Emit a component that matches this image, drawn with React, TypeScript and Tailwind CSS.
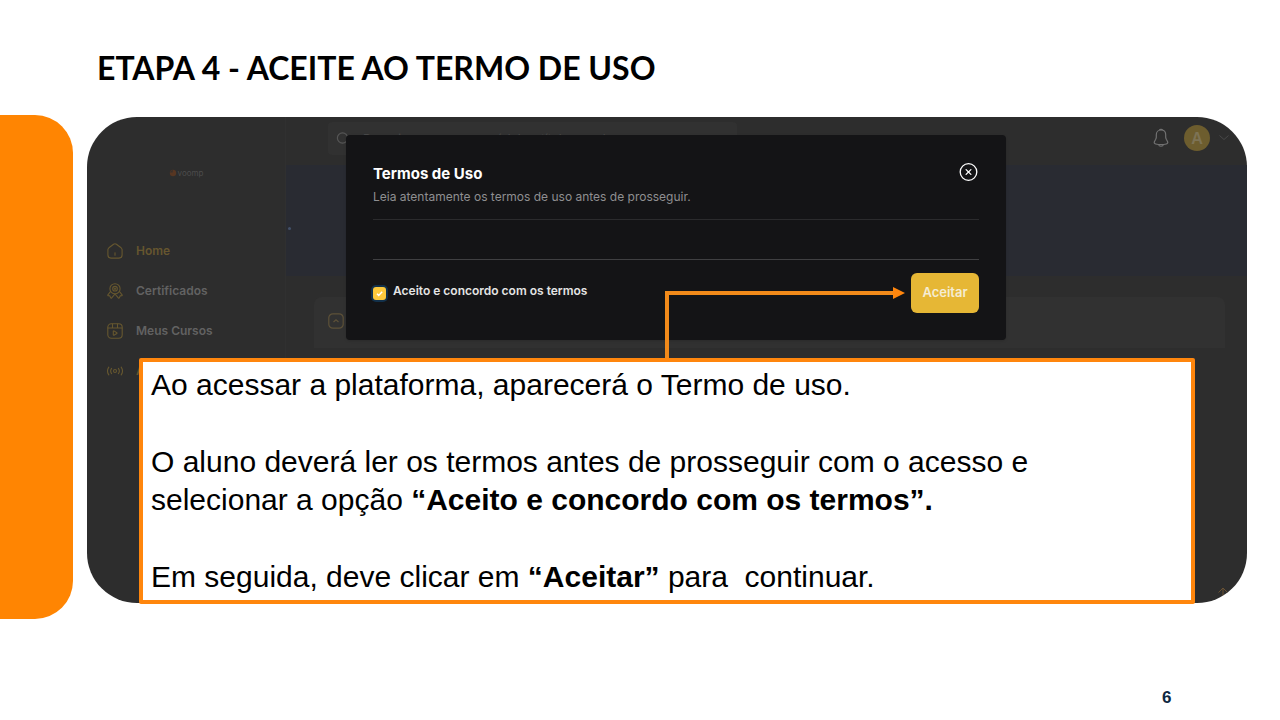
import React from "react";

type IconProps = { className?: string };

function HomeIcon({ className }: IconProps) {
  return (
    <svg viewBox="0 0 16 16" className={className} fill="none" stroke="currentColor" strokeWidth="1.100" strokeLinecap="round" strokeLinejoin="round" aria-hidden="true">
      <path d="M6.600 1.300 1.900 4.800C1.200 5.400.8 6.300.9 7.200V12.100C.9 13.800 2.100 15.100 3.900 15.100H12.100C13.900 15.100 15.100 13.800 15.100 12.100V7.200C15.200 6.300 14.800 5.400 14.100 4.800L9.400 1.300C8.600.7 7.400.7 6.600 1.300Z" />
      <path d="M8 12.200V9.800" />
    </svg>
  );
}

function CertificateIcon({ className }: IconProps) {
  return (
    <svg viewBox="0 0 16 16" className={className} fill="none" stroke="currentColor" strokeWidth="1.100" strokeLinecap="round" strokeLinejoin="round" aria-hidden="true">
      <circle cx="8" cy="5.800" r="5.100" />
      <circle cx="8" cy="5.700" r="2.300" />
      <path d="M8 5v1.400M7.300 5.700h1.400" />
      <path d="M3.500 8.500.9 11.900c-.3.500 0 .9.500.9l1.500.1.600 1.700c.2.600.8.700 1.200.2L8 11l3.300 3.800c.4.500 1 .4 1.200-.2l.6-1.700 1.500-.1c.5 0 .8-.4.500-.9l-2.600-3.400" />
    </svg>
  );
}

function CoursesIcon({ className }: IconProps) {
  return (
    <svg viewBox="0 0 16 16" className={className} fill="none" stroke="currentColor" strokeWidth="1.100" strokeLinecap="round" strokeLinejoin="round" aria-hidden="true">
      <rect x=".8" y=".8" width="14.400" height="14.400" rx="3.500" />
      <path d="M1 5h14M5.500 1v4M10.500 1v4" />
      <path d="M6.300 8.300v3.500c0 .4.400.6.700.4l2.800-1.700c.4-.2.400-.6 0-.8L7 7.900c-.3-.2-.7 0-.7.4Z" />
    </svg>
  );
}

function LiveIcon({ className }: IconProps) {
  return (
    <svg viewBox="0 0 16 16" className={className} fill="none" stroke="currentColor" strokeWidth="1.100" strokeLinecap="round" aria-hidden="true">
      <circle cx="8" cy="8" r="1.500" />
      <path d="M4.600 5.400a4.400 4.400 0 0 0 0 5.200M11.400 5.400a4.400 4.400 0 0 1 0 5.200M1.800 4.100a7 7 0 0 0 0 7.800M14.200 4.100a7 7 0 0 1 0 7.800" />
    </svg>
  );
}

const menu = [
  { label: "Home", Icon: HomeIcon, tone: "text-[#66562f]" },
  { label: "Certificados", Icon: CertificateIcon, tone: "text-[#626262]" },
  { label: "Meus Cursos", Icon: CoursesIcon, tone: "text-[#626262]" },
  { label: "A", Icon: LiveIcon, tone: "text-[#66562f]" },
];

function Sidebar() {
  return (
    <aside className="w-[199px] shrink-0 border-r border-[#303030]">
      <div className="mt-[51px] flex items-center justify-center gap-px text-[#4c4c4c]">
        <svg viewBox="0 0 8 8" className="size-2" aria-hidden="true">
          <circle cx="4" cy="4" r="3.200" fill="#573622" />
          <path d="M1 3.500A3 3 0 0 1 4 1l-.5 2.500Z" fill="#38302c" />
        </svg>
        <span className="text-[8px] leading-[10px]">voomp</span>
      </div>
      <nav className="mt-[63px] flex flex-col gap-5 pl-5">
        {menu.map(({ label, Icon, tone }) => (
          <a key={label} href="#" className={`flex h-5 items-center gap-[13px] text-xs font-semibold ${tone}`}>
            <Icon className="size-4 text-[#66572f]" />
            {label}
          </a>
        ))}
      </nav>
    </aside>
  );
}

function TopBar() {
  return (
    <header className="flex h-12 items-start justify-between">
      <label className="ml-[42px] mt-[5px] flex h-[33px] w-[409px] items-center gap-3 rounded-sm bg-[#313131] px-2">
        <svg viewBox="0 0 16 16" className="size-4 text-[#565656]" fill="none" stroke="currentColor" strokeWidth="1.300" aria-hidden="true">
          <circle cx="7" cy="7" r="5.500" />
          <path d="m11 11 3 3" />
        </svg>
        <input type="search" aria-label="Pesquisar" placeholder="Pesquise por cursos, módulos, títulos e aulas" className="w-full bg-transparent text-xs placeholder:text-[#484848]" />
      </label>
      <div className="mr-[17px] mt-2 flex items-center gap-[14px]">
        <button type="button" aria-label="Notificações" className="text-[#727272]">
          <svg viewBox="0 0 18 20" className="h-5 w-[18px]" fill="none" stroke="currentColor" strokeWidth="1.200" strokeLinejoin="round" aria-hidden="true">
            <path d="M9 2C6.200 2 4.300 4 4.300 6.800v2.400c0 .7-.3 1.500-.6 2.100L2.500 13.500c-.6 1.200-.2 2.200 1.100 2.500 3.600.8 7.200.8 10.800 0 1.300-.3 1.700-1.300 1.100-2.500l-1.200-2.200c-.3-.6-.6-1.400-.6-2.100V6.800C13.700 4 11.800 2 9 2Z" />
            <path d="M7.500 2.200c.2-1.200 2.800-1.200 3 0M6.600 16.500c.3 2.300 4.500 2.300 4.800 0" />
          </svg>
        </button>
        <button type="button" aria-label="Conta" className="flex items-center gap-2">
          <span className="flex size-[26px] items-center justify-center rounded-full bg-[#6d5d2e] text-base font-semibold text-[#7d7355]">A</span>
          <svg viewBox="0 0 12 12" className="size-3 text-[#484848]" fill="none" stroke="currentColor" aria-hidden="true">
            <path d="m1.500 3.500 4.500 4 4.500-4" />
          </svg>
        </button>
      </div>
    </header>
  );
}

function Platform() {
  return (
    <div className="relative flex min-h-[486px] overflow-hidden rounded-[50px] bg-[#2d2d2d] font-['Inter',sans-serif]">
      <Sidebar />
      <div className="min-w-0 flex-1">
        <TopBar />
        <div className="h-[111px] bg-[#292b32] pl-0.5 pt-[62px]">
          <div className="size-[3px] rounded-full bg-[#435069]" />
        </div>
        <div className="ml-7 mr-[22px] mt-[21px] h-[51px] rounded-t-lg bg-[#313131] px-[14px] pt-4">
          <svg viewBox="0 0 16 16" className="size-4 text-[#5d5138]" fill="none" stroke="currentColor" strokeWidth="1.200" aria-hidden="true">
            <rect x=".8" y=".8" width="14.400" height="14.400" rx="4" />
            <path d="m5.500 9 2.500-2.300L10.500 9" />
          </svg>
        </div>
      </div>
      <svg viewBox="0 0 12 16" className="absolute bottom-0 right-[18px] h-4 w-3 text-[#6a5234]" fill="none" stroke="currentColor" aria-hidden="true">
        <path d="M1.500 5.500 6 1l4.500 4.500M6 1v15" />
      </svg>
    </div>
  );
}

function TermsDialog() {
  return (
    <section role="dialog" aria-labelledby="terms-title" className="absolute left-[259px] right-[241px] top-[18px] rounded-[4px] bg-[#141416] px-[27px] pb-[27px] pt-7 font-['Inter',sans-serif] shadow-sm">
      <div className="flex items-start justify-between border-b border-[#2b2b2d] pb-[13px]">
        <div className="pt-px">
          <h2 id="terms-title" className="text-[15px] font-bold leading-5 text-white">Termos de Uso</h2>
          <p className="mt-1 text-xs leading-[18px] text-[#8f8f91]">Leia atentamente os termos de uso antes de prosseguir.</p>
        </div>
        <button type="button" aria-label="Fechar" className="text-white">
          <svg viewBox="0 0 20 20" className="size-5" fill="none" stroke="currentColor" strokeWidth="1.300" strokeLinecap="round" aria-hidden="true">
            <circle cx="9.500" cy="9" r="8.300" />
            <path d="m7.100 6.600 4.800 4.800m0-4.800-4.800 4.800" />
          </svg>
        </button>
      </div>
      <div className="h-10 border-b border-[#404042]" />
      <div className="mt-[13px] flex items-start justify-between">
        <label className="mt-2.5 flex items-start gap-[7px] text-xs font-semibold leading-4 text-[#e4e4e4]">
          <span className="relative mt-1 flex size-[13px]">
            <input type="checkbox" defaultChecked className="size-[13px] appearance-none rounded-[3px] bg-[#fcc83c] ring-2 ring-[#12304a]" />
            <svg viewBox="0 0 13 13" className="pointer-events-none absolute inset-0 size-[13px]" fill="none" stroke="#ffffff" strokeWidth="1.500" aria-hidden="true">
              <path d="m4 6.700 1.700 1.700 3.500-3.600" />
            </svg>
          </span>
          Aceito e concordo com os termos
        </label>
        <button type="button" className="h-10 w-[68px] rounded-md bg-[#e6b735] text-[13px] font-semibold text-[#f5ecd2]">Aceitar</button>
      </div>
    </section>
  );
}

function Callout() {
  return (
    <div className="absolute left-[52px] right-[52px] top-[241px] rounded-[2px] border-4 border-[#ff860d] bg-white px-2 py-1 font-['Liberation_Sans',sans-serif] text-[30px] leading-[38px] text-black">
      <p>Ao acessar a plataforma, aparecerá o Termo de uso.</p>
      <p className="mt-[39px]">
        O aluno deverá ler os termos antes de prosseguir com o acesso e<br />
        selecionar a opção <strong>“Aceito e concordo com os termos”.</strong>
      </p>
      <p className="mt-[39px] whitespace-pre-wrap">
        Em seguida, deve clicar em <strong>“Aceitar”</strong>{" para  continuar."}
      </p>
    </div>
  );
}

export default function App() {
  return (
    <main className="flex min-h-screen flex-col bg-white">
      <h1 className="pl-[97px] pt-[46px] font-['Lato',sans-serif] text-[32px] font-bold leading-[44px] text-black">ETAPA 4 - ACEITE AO TERMO DE USO</h1>
      <div className="mt-[25px] flex gap-[14px]">
        <div className="h-[504px] w-[73px] shrink-0 rounded-r-[38px] bg-[#ff8502]" />
        <div className="relative mr-[33px] mt-0.5 min-w-0 flex-1">
          <Platform />
          <TermsDialog />
          <svg viewBox="0 0 242 70" className="absolute left-[577px] top-[171px] h-[70px] w-[242px] overflow-visible" aria-hidden="true">
            <path d="M3 70V5h230" fill="none" stroke="#f28a1a" strokeWidth="4" />
            <path d="M229-1v12l12-6Z" fill="#ff860d" />
          </svg>
          <Callout />
        </div>
      </div>
      <footer className="mt-auto pb-3 pl-[1162px] font-['Liberation_Sans',sans-serif] text-[17px] font-bold leading-5 text-[#0e2841]">6</footer>
    </main>
  );
}
